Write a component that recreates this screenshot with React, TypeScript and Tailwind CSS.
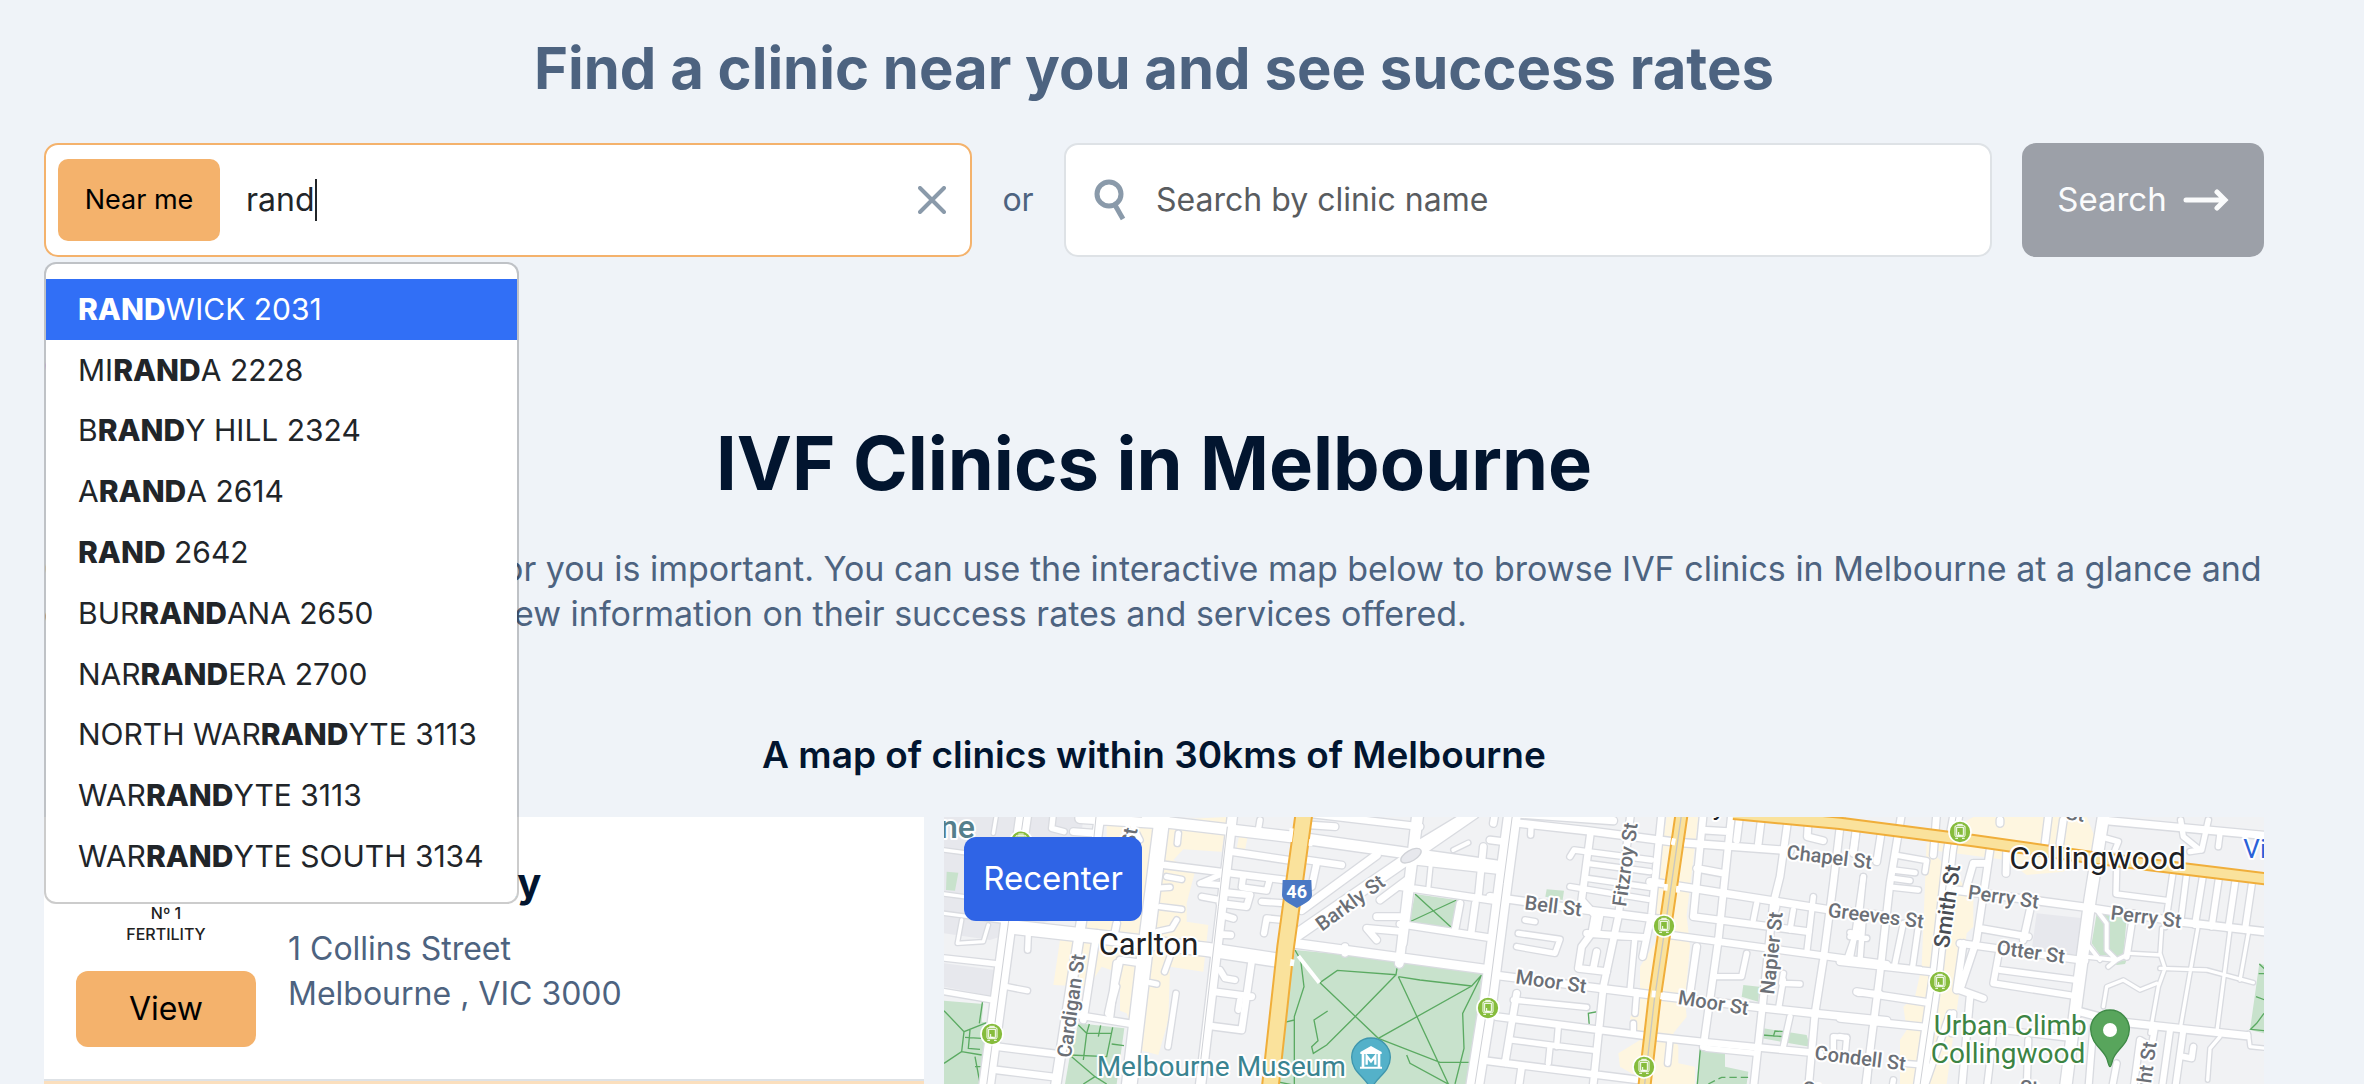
import { Fragment } from 'react';

const suburbs = [
  ['', 'WICK 2031'],
  ['MI', 'A 2228'],
  ['B', 'Y HILL 2324'],
  ['A', 'A 2614'],
  ['', ' 2642'],
  ['BUR', 'ANA 2650'],
  ['NAR', 'ERA 2700'],
  ['NORTH WAR', 'YTE 3113'],
  ['WAR', 'YTE 3113'],
  ['WAR', 'YTE SOUTH 3134'],
];

/* Map geometry: three neighbouring tiles, three units to a pixel. */
type Road = [width: number, d: string];
type Tile = { x: number; roads: Road[] };

const tiles: Tile[] = [
  {
    x: 0,
    roads: [
      [12, 'M12 150L72 158M12 282L72 290M12 340L200 365M65 360L52 430L130 425L145 375M160 100L170 40'],
      [18, 'M12 474L175 492M12 575L160 600M265 400L263 450M200 560L262 572M340 40L335 85L372 95'],
      [22, 'M170 740L350 762M170 810L350 832M410 645L590 674M400 95L470 100M530 370L520 420M470 400L430 660M530 490L510 650M505 640L540 480L610 490'],
      [18, 'M530 560L508 640M650 552L630 548M708 580L684 740M690 470L674 515M600 120L560 40M520 50L600 68'],
      [18, 'M715 100L712 130M680 230L725 238M640 265L690 262M660 320L725 328M650 395L695 385L710 360M960 60L955 90M850 220L780 250'],
      [22, 'M675 195L1050 242M875 155L1055 182M840 310L920 320L930 285L860 278M845 345L880 355M850 404L872 405M820 575L935 590M812 678L905 690L934 490'],
      [20, 'M910 225L905 262L980 272L990 235M785 250L840 255M785 290L840 300M840 510L855 535L885 540M1035 310L965 305M1030 360L980 355L972 400M900 600L895 630'],
      [22, 'M1100 180L1205 195M1130 190L1115 260M1110 75L1185 80M1440 80L1100 40M1320 300L1400 240M1380 350L1310 350M1390 395L1280 385L1310 420M1215 440L1215 460'],
      [30, 'M480 40L440 330M425 360L345 870M878 40L845 320L780 870M420 55L650 70'],
      [28, 'M1430 40L1378 490M1065 430L1640 508'],
      [26, 'M1085 330L1310 165'],
      [36, 'M1070 405L1600 40'],
      [34, 'M620 60L1065 112L1690 200'],
      [46, 'M252 40L205 370L138 870M668 40L612 480L566 870'],
      [42, 'M205 380L470 410L800 448L1010 480'],
    ],
  },
  {
    x: 1380,
    roads: [
      [22, 'M60 40L10 430M0 260L300 304M0 372L262 412M250 140L235 290M180 310L165 390M226 310L214 395M270 120L310 125M285 40L280 70'],
      [14, 'M92 195L85 265M160 150L205 128'],
      [18, 'M393 80L392 105M510 170L522 150L755 180M560 190L750 215M560 235L750 262M510 260L745 298M375 360L405 365M355 400L480 418L465 460L350 440'],
      [22, 'M572 95L545 300L585 345L575 400L545 440L535 505L620 515M590 455L580 505M560 400L730 412M600 345L590 400'],
      [18, 'M705 410L690 570M650 410L730 412M710 575L705 640M700 670L700 700M340 600L560 622M335 720L450 735L590 752M475 680L470 740M450 740L445 790'],
      [22, 'M692 40L655 350L610 560L578 870M785 40L755 340L728 470M350 580L315 790M290 650L740 708L925 728L1260 760M240 780L715 840M365 800L355 870'],
      [22, 'M910 40L880 350L1225 395M810 405L1460 493M995 40L955 420L910 740M890 440L870 580M905 90L985 95M890 205L970 220M1020 40L1010 120'],
      [24, 'M270 290L560 330L780 358M280 525L760 585L1100 625L1260 642L1460 662M360 70L560 92L830 127L1170 152M750 245L1280 328L1460 348M330 40L640 62'],
      [22, 'M1085 50L1075 130M1165 50L1140 230L1120 310L1085 640L1060 870M1225 60L1222 110L1270 122M1325 40L1300 250L1270 480L1245 640L1225 870M1370 80L1360 150'],
      [18, 'M1390 230L1365 400L1350 480M1240 290L1220 460M1070 310L1060 360M1130 320L1115 380M1180 330L1170 390M1390 350L1380 480M1350 410L1400 415M1040 460L1025 530L950 530M1150 520L1145 550L1200 552M1440 580L1375 580M1150 540L1135 630'],
      [18, 'M1170 650L1150 740M1300 770L1300 710L1340 712L1335 770M810 720L803 790M1420 660L1400 870M920 745L1070 760'],
      [30, 'M50 140L240 25M50 180L300 208'],
      [52, 'M338 40L310 250L265 600L222 870'],
    ],
  },
  {
    x: 2700,
    roads: [
      [22, 'M185 40L150 250L120 520L75 870M290 40L280 165M125 90L110 185M50 80L40 160M0 485L290 517M145 500L240 510M50 575L262 607M0 655L262 682'],
      [18, 'M165 165L260 182L255 215M160 210L225 218M160 235L210 242M160 262L235 270M70 230L55 380L20 480M60 400L30 398M190 370L165 490M235 380L218 500M160 840L155 870M190 790L250 795M0 710L20 715'],
      [22, 'M450 150L410 420L360 570L430 595M390 590L365 870M400 190L440 190M400 190L380 260M370 430L350 570M500 150L498 220M570 330L550 420M420 385L565 410M360 430L735 482M480 60L480 70M625 50L615 130M670 60L660 130'],
      [20, 'M480 440L460 550L705 588M480 510L710 540M340 640L335 700M460 700L440 870M400 680L700 715M565 720L560 870M330 640L250 870'],
      [24, 'M345 270L740 322L1030 367L1290 397M720 635L830 665L1220 707M800 62L1290 108'],
      [18, 'M800 115L835 125L825 150M1022 60L1030 110L1080 150L1050 155M1105 60L1085 150M1140 100L1135 140M830 200L828 282L985 302M1000 210L975 380M1040 220L1022 365'],
      [20, 'M1090 220L1065 375M1138 225L1115 380M1188 230L1165 385M1238 235L1215 390M880 340L860 470'],
      [12, 'M965 385L960 460L975 505L955 560L930 700M1075 375L1020 690M1170 390L1130 700M960 505L1100 510L1240 548M790 620L800 560L850 540L900 570L950 550M870 460L960 465M1225 400L1200 540M1225 700L1230 740L1280 745M1140 710L1110 745L1103 840'],
      [20, 'M945 680L935 740L900 720L880 870M990 690L965 870M1030 690L1005 870M1060 740L1055 775L1030 770M760 680L745 870M830 790L815 870'],
      [14, 'M770 330L800 370L800 450L830 480L805 500M740 470L830 480L860 465M740 430L780 480'],
      [38, 'M350 40L330 150L290 510L238 870'],
      [36, 'M792 40L750 300L710 600L676 870'],
    ],
  },
];

const highways: Road[] = [
  [42, 'M2225 40L2180 350L2143 600L2112 870'],
  [40, 'M2380 40L2700 70L3100 122L3450 172L3990 238'],
  [56, 'M1092 40L1037 440L990 870'],
];

const trams = [
  [243, 125],
  [156, 702],
  [2172, 378],
  [1644, 624],
  [2112, 801],
  [3060, 96],
  [3000, 546],
];

type Label = { x: number; y: number; t: string; r?: number; k?: string };
const road = 'fill-[#6b6f76] text-[60px] font-medium';
const labels: Label[] = [
  { x: 1146, y: 395, t: 'Barkly St', r: -36 },
  { x: 392, y: 775, t: 'Cardigan St', r: -82 },
  { x: 575, y: 190, t: 'n St', r: -80 },
  { x: 1752, y: 328, t: 'Bell St', r: 7 },
  { x: 1725, y: 550, t: 'Moor St', r: 8 },
  { x: 2212, y: 612, t: 'Moor St', r: 9 },
  { x: 2058, y: 322, t: 'Fitzroy St', r: -82 },
  { x: 2502, y: 585, t: 'Napier St', r: -84 },
  { x: 2538, y: 176, t: 'Chapel St', r: 7 },
  { x: 2662, y: 350, t: 'Greeves St', r: 7 },
  { x: 2622, y: 778, t: 'Condell St', r: 7 },
  { x: 3026, y: 446, t: 'Smith St', r: -82, k: 'fill-[#4a4e55] text-[66px] font-medium' },
  { x: 3082, y: 296, t: 'Perry St', r: 8 },
  { x: 3510, y: 358, t: 'Perry St', r: 7 },
  { x: 3168, y: 462, t: 'Otter St', r: 8 },
  { x: 3626, y: 900, t: 'ight St', r: -82 },
  { x: 3375, y: 58, t: 'St', r: 8 },
  { x: 2585, y: 885, t: 'St', r: 8 },
  { x: 3240, y: 885, t: 'St' },
  { x: 2318, y: 46, t: 'y', k: 'fill-[#202124] text-[78px]' },
  { x: 476, y: 465, t: 'Carlton', k: 'fill-[#202124] text-[93px]' },
  { x: 3208, y: 208, t: 'Collingwood', k: 'fill-[#202124] text-[96px]' },
  { x: 0, y: 115, t: 'ne', k: 'fill-[#547f8c] text-[96px] font-medium' },
  { x: 470, y: 829, t: 'Melbourne Museum', k: 'fill-[#3a8390] text-[84px]' },
  { x: 2981, y: 704, t: 'Urban Climb', k: 'fill-[#3c8443] text-[84px]' },
  { x: 2972, y: 788, t: 'Collingwood', k: 'fill-[#3c8443] text-[84px]' },
  { x: 3910, y: 174, t: 'Vi', k: 'fill-[#2a62d8] text-[78px]' },
];

function MapDrawing() {
  return (
    <svg
      viewBox="12 51 3960 801"
      preserveAspectRatio="xMinYMin slice"
      className="block h-full w-full bg-[#f1f2f4] font-['Roboto',sans-serif]"
      role="img"
      aria-label="Street map of Carlton, Fitzroy and Collingwood"
    >
      <g fill="#e7e8ed">
        <path d="M12 51H430L400 340L150 420L12 400Z" />
        <path d="M12 490L165 510V590L12 560Z" />
        <path d="M3290 340L3430 355L3420 465L3275 450Z" />
      </g>
      <g fill="#fef6e0">
        <path d="M500 70L860 51L845 155L730 148L700 180L765 215L740 310V365L805 375L790 515L690 500L685 660L655 765L600 750L560 640L540 632V520L485 500L445 560L340 555L360 420L440 430V365L500 360Z" />
        <path d="M900 95L925 100L915 150L890 145Z" />
        <path d="M2180 51H2275L2240 345L2250 440L2235 600L2240 650L2200 700L2215 740V790L2265 800V852H2130L2040 800L2035 760L2100 720L2070 655L2100 590V500L2150 420L2140 310Z" />
        <path d="M2970 150L3200 180L3260 225L3370 215L3480 150L3460 100L3440 51H3100L2960 130L2945 500L2925 590L2890 620L2900 690L2880 720V852H3020L3060 560L3080 400L3100 380V300L3060 240Z" />
      </g>
      <g fill="#c8e2cc">
        <path d="M20 215L55 218L45 272L18 270ZM12 602L130 612L125 665L145 668L118 852H12Z" />
        <path d="M415 670L553 685L530 852H375L390 765Z" />
        <path d="M1065 450L1380 480L1625 520L1600 852H1010L1030 670Z" />
        <path d="M1425 282L1550 300L1540 388L1408 366Z" />
        <path d="M1820 268L1872 272L1868 300L1816 290ZM2410 555L2458 560L2455 605L2405 590ZM2470 685L2600 705L2610 740L2465 715ZM2282 735L2355 755V800L2425 815L2420 852H2270Z" />
        <path d="M3470 340L3560 355L3550 470L3480 465L3455 430ZM3520 485L3560 480L3555 492L3530 495ZM3958 490L3972 495V700L3930 690Z" />
      </g>
      <g fill="none" stroke="#5baa62" strokeWidth="4">
        <path d="M1065 450L1082 480L1092 560L1063 650V852M1030 668L1063 660M1140 548L1192 511L1368 524L1375 480M1140 548L1315 715L1595 558L1625 525M1368 524L1245 650L1160 735L1120 760L1115 740L1134 722L1122 660L1163 633M1375 530L1440 540L1595 558M1375 530L1525 852M1315 715L1500 787H1588M1625 525L1568 640L1572 745L1545 852M1400 765L1410 790L1530 855M1010 845L1060 855" />
        <path d="M1425 282L1540 388M1408 366L1550 300" />
        <path d="M12 632L72 695L140 668M72 695L65 755L12 790M65 755L125 765M128 602L118 670M75 712L125 715M90 690L85 745L120 748M105 770L120 850M105 800L125 800" />
        <path d="M415 675L440 700H515M448 672L440 700L430 780M482 676L475 710M518 682L500 770L390 765M395 770L465 830L500 852M515 732L552 737M465 830L430 852" />
        <path d="M1983 633L1945 640L1948 678M2282 735L2272 852M2467 705L2530 710L2535 695L2505 693L2500 710M2540 708L2532 735" />
        <path d="M2305 852L2345 832H2425" strokeDasharray="22 12" />
        <path d="M3958 492L3975 508M3956 521H3975M3948 590L3975 600M3972 640L3950 670L3932 688L3975 692" />
      </g>
      {tiles.map((tile) => (
        <g key={tile.x} transform={`translate(${tile.x} 0)`} fill="none" stroke="#d9dbe0" strokeLinecap="round" strokeLinejoin="round">
          {tile.roads.map(([w, d]) => (
            <path key={d} d={d} strokeWidth={w + 6} />
          ))}
        </g>
      ))}
      {tiles.map((tile) => (
        <g key={tile.x} transform={`translate(${tile.x} 0)`} fill="none" stroke="#fff" strokeLinecap="round" strokeLinejoin="round">
          {tile.roads.map(([w, d]) => (
            <path key={d} d={d} strokeWidth={w - 2} />
          ))}
        </g>
      ))}
      <path d="M1075 468L1138 548" stroke="#fff" strokeWidth="12" />
      <g fill="none" stroke="#cfd1d6" strokeWidth="3">
        <path d="M252 40L205 370L138 870M1718 40L1690 250L1645 600L1602 870M3050 40L3030 150L2990 510L2938 870M468 51L440 330M862 80L835 320L780 800" />
      </g>
      <ellipse cx="1413" cy="167" rx="34" ry="16" transform="rotate(-30 1413 167)" fill="#e7e8ed" stroke="#d0d2d7" strokeWidth="4" />
      <g fill="none">
        {highways.map(([w, d]) => (
          <Fragment key={d}>
            <path d={d} stroke="#f0ae3a" strokeWidth={w} />
            <path d={d} stroke="#fae29c" strokeWidth={w - 12} />
          </Fragment>
        ))}
        <path d={highways[0][1]} stroke="#c9c7c0" strokeWidth="4" />
        <path
          d="M1055 85L1050 125M1114 118L1111 138M2202 115L2198 135M2242 120L2239 138M2178 252L2176 272M2215 258L2213 278M1058 478L1055 498M2142 572L2140 592M2168 578L2166 598"
          stroke="#fff"
          strokeWidth="12"
        />
      </g>
      {trams.map(([x, y]) => (
        <g key={`${x}-${y}`} transform={`translate(${x} ${y})`}>
          <circle r="33" fill="#86bc3c" stroke="#fff" strokeWidth="5" />
          <g fill="none" stroke="#fff" strokeWidth="3">
            <rect x="-15" y="-19" width="30" height="33" rx="4" />
            <rect x="-10" y="-14" width="20" height="24" />
            <path d="M-4 0V10H4M-14 19H-6M6 19H14M-8 -23H8" />
          </g>
        </g>
      ))}
      <path d="M1028 240H1114L1116 285C1116 302 1092 312 1071 324C1050 312 1026 302 1026 285Z" fill="#4a78c4" />
      <text x="1070" y="294" textAnchor="middle" className="fill-white text-[54px] font-bold">46</text>
      {labels.map((l) => (
        <text
          key={`${l.t}-${l.x}`}
          x={l.x}
          y={l.y}
          transform={l.r ? `rotate(${l.r} ${l.x} ${l.y})` : undefined}
          stroke="#fff"
          strokeWidth="12"
          strokeLinejoin="round"
          paintOrder="stroke"
          className={l.k ?? road}
        >
          {l.t}
        </text>
      ))}
      <g transform="translate(1293 772)">
        <path d="M0 100C-8 62 -58 48 -58 0A58 58 0 0 1 58 0C58 48 8 62 0 100Z" fill="#54b1c9" stroke="#3f96ad" strokeWidth="4" />
        <path d="M0 -34L32 -16V-10H-32V-16ZM-28 -10H-20V28H-28ZM20 -10H28V28H20ZM-33 28H33V34H-33Z" fill="#fff" />
        <path d="M-13 22V-4L0 12L13 -4V22" fill="none" stroke="#fff" strokeWidth="7" />
      </g>
      <g transform="translate(3510 688)">
        <path d="M0 112C-3 112 -6 100 -8 92C-16 62 -58 45 -58 0A58 58 0 0 1 58 0C58 45 16 62 8 92C6 100 3 112 0 112Z" fill="#58a55c" stroke="#3f8a47" strokeWidth="4" />
        <circle cy="2" r="21" fill="#fff" />
      </g>
    </svg>
  );
}

export default function App() {
  return (
    <div className="flex h-screen flex-col overflow-hidden bg-[#eff3f8] pt-[33px] pr-[100px] pl-11 font-['Inter',sans-serif] text-[32px] text-[#4d6380]">
      <h2 className="text-center text-[58px] leading-[70px] font-bold">Find a clinic near you and see success rates</h2>

      <form
        className="mt-10 grid h-[114px] shrink-0 grid-cols-[minmax(0,1fr)_92px_minmax(0,1fr)_272px] items-stretch"
        onSubmit={(e) => e.preventDefault()}
      >
        <div className="relative flex items-center rounded-[14px] border-2 border-[#f4b26c] bg-white pr-6 pl-3 text-[#212529]">
          <button type="button" className="h-[82px] w-[162px] rounded-[10px] bg-[#f4b26c] text-[27px] text-black">
            Near me
          </button>
          <input
            type="text"
            aria-label="Suburb or postcode"
            defaultValue="rand"
            className="ml-[26px] max-w-full [field-sizing:content] bg-transparent outline-none"
          />
          <span className="h-[42px] w-[2px] bg-[#212529]" />
          <button type="button" aria-label="Clear" className="ml-auto">
            <svg width="28" height="28" viewBox="0 0 28 28" className="block" stroke="#8a9aaa" strokeWidth="4" strokeLinecap="round">
              <path d="M2 2L26 26M26 2L2 26" />
            </svg>
          </button>
          <ul
            role="listbox"
            aria-label="Matching suburbs"
            className="absolute top-[117px] -left-[2px] z-10 grid h-[642px] w-[475px] grid-rows-10 rounded-xl border-2 border-black/20 bg-white bg-clip-padding pt-[15px] pb-[15px] text-[30px] whitespace-pre"
          >
            {suburbs.map(([before, after], i) => (
              <li
                key={before + after}
                role="option"
                aria-selected={i === 0}
                className={i === 0 ? 'flex items-center bg-[#316ff6] px-8 text-white' : 'flex items-center px-8'}
              >
                {before}
                <strong className="font-extrabold">RAND</strong>
                {after}
              </li>
            ))}
          </ul>
        </div>
        <span className="flex items-center justify-center">or</span>
        <label className="flex items-center gap-[30px] rounded-[14px] border-2 border-[#dee2e6] bg-white px-7">
          <svg width="32" height="42" viewBox="0 0 32 42" className="shrink-0" fill="none" stroke="#8a9aaa">
            <circle cx="15" cy="15" r="12" strokeWidth="5" />
            <path d="M21 26L29 40" strokeWidth="5" />
          </svg>
          <input
            type="text"
            aria-label="Search by clinic name"
            placeholder="Search by clinic name"
            className="w-full min-w-0 bg-transparent text-[#212529] outline-none placeholder:text-[#595c5f]"
          />
        </label>
        <button type="submit" className="ml-[30px] flex items-center justify-center gap-4 rounded-[14px] bg-[#9ca0a8] text-[33px] text-[#fafbfc]">
          Search
          <svg width="46" height="22" viewBox="0 0 46 22" fill="none" stroke="currentColor" strokeWidth="5" strokeLinecap="round">
            <path d="M3 11H40M34 3L42 11L34 19" />
          </svg>
        </button>
      </form>

      <a href="#locate" className="mt-[87px] self-start leading-[45px] text-[#316ff6]">Current location</a>

      <h1 className="mt-[30px] text-center text-[74px] leading-[88px] font-bold text-[#02152f]">IVF Clinics in Melbourne</h1>
      <p className="mt-[39px] text-[34px] leading-[45px] whitespace-nowrap">
        <span className="inline-block w-[459px]">Choosing the right clinic f</span>
        or you is important. You can use the interactive map below to browse IVF clinics in Melbourne at a glance and
        <br />
        <span className="inline-block w-[470px]">compare clinics or vi</span>
        ew information on their success rates and services offered.
      </p>

      <h3 className="mt-[94px] text-center text-[37px] leading-[50px] font-semibold text-[#02152f]">
        A map of clinics within 30kms of Melbourne
      </h3>
      <section className="mt-[37px] grid min-h-0 flex-1 grid-cols-[2fr_3fr] gap-5">
        <div className="min-w-0 overflow-hidden">
          <article className="flex gap-8 border-b-2 border-[#dee2e6] bg-white px-8 pt-8">
            <div className="w-[180px] shrink-0 pb-8">
              <div className="flex h-[122px] flex-col justify-end pb-[26px] text-center text-[16px] leading-[21px] font-medium text-[#222]">
                <span>Nº 1</span>
                <span>FERTILITY</span>
              </div>
              <button type="button" className="h-[76px] w-full rounded-xl bg-[#f4b26c] text-black">View</button>
            </div>
            <div>
              <h4 className="mt-[9px] text-[40px] leading-[50px] font-bold text-[#02152f]">No. 1 Fertility</h4>
              <address className="mt-[18px] leading-[45px] not-italic">
                1 Collins Street
                <br />
                Melbourne , VIC 3000
              </address>
            </div>
          </article>
          <article className="h-40 bg-[#fbdfbd]" />
        </div>
        <div className="relative min-h-0 min-w-0 overflow-hidden">
          <MapDrawing />
          <button type="button" className="absolute top-5 left-5 h-[84px] w-[178px] rounded-xl bg-[#2f64e6] text-[33px] text-white">
            Recenter
          </button>
        </div>
      </section>
    </div>
  );
}
